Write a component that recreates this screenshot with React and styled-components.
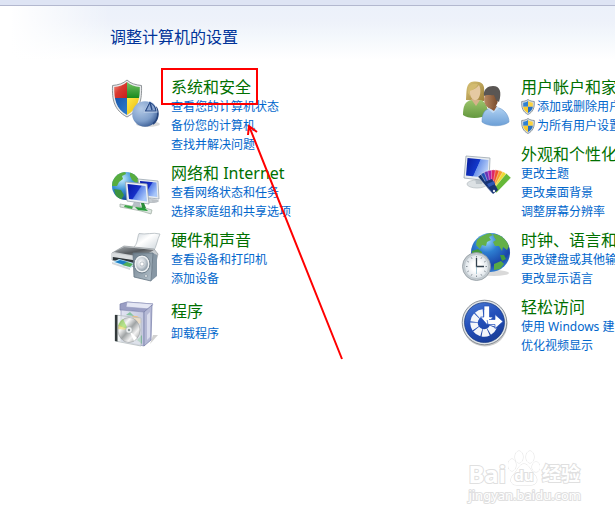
import React from "react";
import styled, { createGlobalStyle } from "styled-components";

const leftColumn = [
  {
    icon: "security",
    title: "系统和安全",
    marked: true,
    links: [
      { text: "查看您的计算机状态" },
      { text: "备份您的计算机" },
      { text: "查找并解决问题" },
    ],
  },
  {
    icon: "network",
    title: "网络和 Internet",
    links: [{ text: "查看网络状态和任务" }, { text: "选择家庭组和共享选项" }],
  },
  {
    icon: "hardware",
    title: "硬件和声音",
    links: [{ text: "查看设备和打印机" }, { text: "添加设备" }],
  },
  {
    icon: "programs",
    title: "程序",
    loose: true,
    links: [{ text: "卸载程序" }],
  },
];

const rightColumn = [
  {
    icon: "users",
    title: "用户帐户和家庭安全",
    links: [
      { text: "添加或删除用户帐户", shield: true },
      { text: "为所有用户设置家长控制", shield: true },
    ],
  },
  {
    icon: "appearance",
    title: "外观和个性化",
    links: [
      { text: "更改主题" },
      { text: "更改桌面背景" },
      { text: "调整屏幕分辨率" },
    ],
  },
  {
    icon: "clock",
    title: "时钟、语言和区域",
    links: [{ text: "更改键盘或其他输入法" }, { text: "更改显示语言" }],
  },
  {
    icon: "access",
    title: "轻松访问",
    links: [{ text: "使用 Windows 建议的设置" }, { text: "优化视频显示" }],
  },
];

const SecurityIcon = () => (
  <svg viewBox="0 0 50 50">
    <defs>
      <clipPath id="secShield">
        <path d="M17 4C20 7 25 8.500 29.800 9C30 21 28 31 17 37C6 31 4 21 4.200 9C9 8.500 14 7 17 4Z" />
      </clipPath>
      <linearGradient id="secRed" x1="0" y1="0" x2="1" y2="1">
        <stop offset="0" stopColor="#f7a596" />
        <stop offset="0.5" stopColor="#d93a30" />
        <stop offset="1" stopColor="#c81d1d" />
      </linearGradient>
      <linearGradient id="secGreen" x1="0" y1="0" x2="0" y2="1">
        <stop offset="0" stopColor="#7cc46a" />
        <stop offset="1" stopColor="#178a1d" />
      </linearGradient>
      <linearGradient id="secBlue" x1="0" y1="0" x2="1" y2="1">
        <stop offset="0" stopColor="#1552a8" />
        <stop offset="1" stopColor="#2f7fd0" />
      </linearGradient>
      <linearGradient id="secYellow" x1="0" y1="0" x2="1" y2="1">
        <stop offset="0" stopColor="#ffe94a" />
        <stop offset="1" stopColor="#e8b400" />
      </linearGradient>
      <radialGradient id="secPie" cx="0.35" cy="0.3" r="0.8">
        <stop offset="0" stopColor="#b4cae6" />
        <stop offset="0.6" stopColor="#7f9fcb" />
        <stop offset="1" stopColor="#2f528c" />
      </radialGradient>
    </defs>
    <ellipse cx="38" cy="46" rx="12" ry="3" fill="#000" opacity="0.15" />
    <path
      d="M17 2C20.500 5.500 26 7 31.500 7.500C32 22 30 32 17 39C4 32 2 22 2.500 7.500C8 7 13.500 5.500 17 2Z"
      fill="#e9ebec"
      stroke="#84898d"
      strokeWidth="0.9"
    />
    <g clipPath="url(#secShield)">
      <rect x="3" y="3" width="14" height="17" fill="url(#secRed)" />
      <rect x="17" y="3" width="14" height="17" fill="url(#secGreen)" />
      <rect x="3" y="20" width="14" height="18" fill="url(#secBlue)" />
      <rect x="17" y="20" width="14" height="18" fill="url(#secYellow)" />
    </g>
    <circle cx="35" cy="36" r="12.8" fill="url(#secPie)" />
    <path d="M46 29A13 13 0 0 1 43 46" fill="none" stroke="#26457d" strokeWidth="1.6" />
    <path d="M33.500 34.500L39.500 23C44 24.500 47 29 47.500 34.500Z" fill="#c7d7ee" />
    <path d="M35.500 33L39.800 24.500C43.500 26 45.500 29 46 33Z" fill="#8ba6d0" stroke="#284a86" strokeWidth="1.2" />
    <path d="M40 24.500L42 32" stroke="#284a86" strokeWidth="1.4" />
  </svg>
);

const NetworkIcon = () => (
  <svg viewBox="0 0 50 50">
    <defs>
      <radialGradient id="netGlobe" cx="0.35" cy="0.25" r="0.8">
        <stop offset="0" stopColor="#c9efff" />
        <stop offset="0.5" stopColor="#3b92d6" />
        <stop offset="1" stopColor="#0c3f8f" />
      </radialGradient>
      <linearGradient id="netScreen" x1="0" y1="0" x2="1" y2="0.6">
        <stop offset="0" stopColor="#0719a5" />
        <stop offset="0.55" stopColor="#1730c8" />
        <stop offset="0.6" stopColor="#5d83e8" />
        <stop offset="1" stopColor="#a8c7fa" />
      </linearGradient>
      <clipPath id="netClip">
        <circle cx="16" cy="22" r="14" />
      </clipPath>
    </defs>
    <circle cx="16" cy="22" r="14" fill="url(#netGlobe)" />
    <g clipPath="url(#netClip)" fill="#58ad3f">
      <path d="M2 17C4 11 9 7 15 7L16 10L12 12L13 15L9 18L7 22L2 22Z" />
      <path d="M20 8C24 9 28 12 30 17L26 19L22 16L20 12Z" />
      <path d="M4 25L11 26L14 31L11 36L6 33Z" fill="#3c9340" />
    </g>
    <ellipse cx="41" cy="37" rx="8" ry="2" fill="#8f98a0" opacity="0.6" />
    <path d="M36 33L41 33L42 38L35 37Z" fill="#c7ced3" />
    <path d="M28 15L48 17L49 35L30 33Z" fill="#e8edf1" stroke="#9ba6b0" strokeWidth="0.8" />
    <path d="M30 17L46.500 18.500L47.300 33L31 31Z" fill="url(#netScreen)" />
    <path d="M24 38L30 39L31 43L22 42Z" fill="#b7c0c6" />
    <path d="M15.500 18L37 20L39 40L17 37Z" fill="#eef2f5" stroke="#99a5af" strokeWidth="0.8" />
    <path d="M17.500 20L35.500 22L37 37.500L19 35Z" fill="url(#netScreen)" />
    <path d="M10 40L21 42L32 43L42 46L41 50L31 47L21 45L10 43Z" fill="#dce6df" stroke="#9caaa0" strokeWidth="0.7" />
    <path d="M15 41L23 42.500L22 45L14 43Z" fill="#42a84c" />
    <path d="M25 43L35 44L38 47L28 46Z" fill="#239b38" />
    <path d="M31 39L34 39L36 44L32 44Z" fill="#2b8d3b" />
  </svg>
);

const HardwareIcon = () => (
  <svg viewBox="0 0 50 50">
    <defs>
      <linearGradient id="hwPaper" x1="0" y1="0" x2="1" y2="1">
        <stop offset="0" stopColor="#cfd6dc" />
        <stop offset="0.4" stopColor="#ffffff" />
        <stop offset="1" stopColor="#c6cfd6" />
      </linearGradient>
      <linearGradient id="hwTop" x1="0" y1="0" x2="1" y2="1">
        <stop offset="0" stopColor="#a4a9ad" />
        <stop offset="0.5" stopColor="#55595d" />
        <stop offset="1" stopColor="#b7babc" />
      </linearGradient>
      <linearGradient id="hwSpk" x1="0" y1="0" x2="1" y2="1">
        <stop offset="0" stopColor="#6f7f8c" />
        <stop offset="1" stopColor="#b4c2cc" />
      </linearGradient>
      <radialGradient id="hwCone" cx="0.4" cy="0.4" r="0.6">
        <stop offset="0" stopColor="#ffffff" />
        <stop offset="0.6" stopColor="#ccd3d9" />
        <stop offset="1" stopColor="#92a0ab" />
      </radialGradient>
    </defs>
    <path d="M29 2.500C36 4 43 1 50 3C47 9 47 15 43 21L23 17C28 13 27 7 29 2.500Z" fill="url(#hwPaper)" stroke="#a9b1b7" strokeWidth="0.7" />
    <path d="M2 22L14 15L44 18L48 23L46 31L24 36L2 29Z" fill="#c9cdd0" stroke="#858c91" strokeWidth="0.6" />
    <path d="M4 21L14 16L44 19L32 26Z" fill="url(#hwTop)" />
    <path d="M2 22L27 26V30L2 26Z" fill="#dadddf" />
    <path d="M3 26L26 29.500V34L3 29Z" fill="#2e3438" />
    <path d="M3 31L9 28L24 32L21 37Z" fill="#b9e4f8" />
    <path d="M5 31L10 29L18 31L14 34Z" fill="#1b7dc4" />
    <path d="M12 34L17 31L23 33L20 36Z" fill="#54ad59" />
    <path d="M2 31L20 37V39L2 33Z" fill="#d3d8db" />
    <path d="M43 22L47 24V45L41 50Z" fill="#8797a4" />
    <path d="M23 22L43 22L41 50L24 46Z" fill="url(#hwSpk)" stroke="#637481" strokeWidth="0.8" />
    <ellipse cx="32" cy="33" rx="8" ry="9" fill="#eef1f3" stroke="#6d7d89" />
    <ellipse cx="32" cy="33" rx="6" ry="7" fill="url(#hwCone)" />
    <circle cx="32" cy="33" r="2" fill="#fff" stroke="#9aa5ad" strokeWidth="0.6" />
    <circle cx="36" cy="45" r="1.400" fill="#edf0f2" stroke="#637481" strokeWidth="0.5" />
  </svg>
);

const ProgramsIcon = () => (
  <svg viewBox="0 0 50 50">
    <defs>
      <linearGradient id="prFront" x1="0" y1="0" x2="1" y2="0">
        <stop offset="0" stopColor="#e3e5f3" />
        <stop offset="1" stopColor="#c3c7df" />
      </linearGradient>
      <linearGradient id="prDisc" x1="0" y1="0" x2="1" y2="1">
        <stop offset="0" stopColor="#8b8f90" />
        <stop offset="0.3" stopColor="#f7f7f7" />
        <stop offset="0.5" stopColor="#9fa3a4" />
        <stop offset="0.7" stopColor="#f2f2f2" />
        <stop offset="1" stopColor="#8b8f90" />
      </linearGradient>
    </defs>
    <path d="M40 46L48 37L43 37Z" fill="#000" opacity="0.18" />
    <path d="M10 6L17 4L43 6L35 14L10 12Z" fill="#9a9ec4" stroke="#777da8" strokeWidth="0.7" />
    <path d="M17 4L43 6L40 11L16 9Z" fill="#e5e7f4" stroke="#9499bd" strokeWidth="0.6" />
    <path d="M11 12L34 14V48L11 43Z" fill="url(#prFront)" stroke="#8e94b7" strokeWidth="0.7" />
    <path d="M34 14L42 7L41 42L34 48Z" fill="#b4b8d5" stroke="#747ba6" strokeWidth="0.7" />
    <path d="M37 17L40 14V39L37 42Z" fill="#d8dbec" />
    <path d="M22 18C28 17 32 21 31 25L26 27Z" fill="#efbf7e" />
    <path d="M16 17L20 14L24 18Z" fill="#86c4a0" />
    <path d="M27 42L32 37V46Z" fill="#63b289" />
    <path d="M5 17L31 20V48L5 43Z" fill="#e6ebec" fillOpacity="0.65" stroke="#b5bcbf" strokeWidth="0.8" />
    <path d="M5 17H7.500V43.500L5 43Z" fill="#333a3b" />
    <ellipse cx="19" cy="32" rx="11" ry="12.500" fill="url(#prDisc)" stroke="#909596" strokeWidth="0.5" />
    <path d="M18 31L8 28C9 24 11 22 13 21Z" fill="#8fd94a" opacity="0.6" />
    <path d="M19 32L8 31L9 27Z" fill="#f0d548" opacity="0.5" />
    <path d="M19 32L27 40L24 43Z" fill="#fff" />
    <circle cx="19" cy="32" r="3.300" fill="#edf0f1" stroke="#9ca2a4" strokeWidth="0.6" />
    <circle cx="19" cy="32" r="1.200" fill="#8b9799" />
  </svg>
);

const UsersIcon = () => (
  <svg viewBox="0 0 50 50">
    <defs>
      <linearGradient id="usHair" x1="0" y1="0" x2="1" y2="1">
        <stop offset="0" stopColor="#d9c478" />
        <stop offset="1" stopColor="#9c7f38" />
      </linearGradient>
      <linearGradient id="usGreen" x1="0" y1="0" x2="0" y2="1">
        <stop offset="0" stopColor="#9cc56c" />
        <stop offset="1" stopColor="#64983f" />
      </linearGradient>
      <linearGradient id="usBlue" x1="0" y1="0" x2="0" y2="1">
        <stop offset="0" stopColor="#aed0f2" />
        <stop offset="1" stopColor="#6c9fd6" />
      </linearGradient>
      <linearGradient id="usFace" x1="0" y1="0" x2="1" y2="0">
        <stop offset="0" stopColor="#b98a63" />
        <stop offset="1" stopColor="#76482a" />
      </linearGradient>
    </defs>
    <path d="M6 22C7 14 5 4 14 3.500C23 3 25 8 24 14V23Z" fill="url(#usHair)" />
    <path d="M3 37C3 28 5 23 12 22L21 22C26 24 28 30 28 36C22 41 8 41 3 37Z" fill="url(#usGreen)" />
    <path d="M11 21L16 28L20 22Z" fill="#d5b28a" />
    <path d="M10 12C13 12 17 10 19 7C21 11 21 17 18 21C15 24 9 21 10 12Z" fill="#e5c9a2" />
    <path d="M8 15C8 8 11 5 18 6C16 11 12 12 10 13L10 18Z" fill="#d3bb70" />
    <path d="M22 44C22 35 25 31 30 31L39 30C45 32 49 38 49 44C43 49 28 49 22 44Z" fill="url(#usBlue)" stroke="#6696ca" strokeWidth="0.6" />
    <path d="M28 31L33 35L39 30L36 27H29Z" fill="#c6dcf3" />
    <path d="M28 29L34 33L37 28Z" fill="#8b5838" />
    <ellipse cx="31" cy="21" rx="7" ry="9.500" fill="url(#usFace)" />
    <path d="M24 18C23 11 28 8 33 8C40 8 42 14 39 24L36 22L34 17C31 18 28 16 24 18Z" fill="#5a5653" />
  </svg>
);

const fanColors = [
  "#15316f",
  "#2152b7",
  "#6635b5",
  "#b122a4",
  "#dd2562",
  "#ee512c",
  "#f4a22a",
  "#edda31",
  "#66b938",
];

const AppearanceIcon = () => (
  <svg viewBox="0 0 50 50">
    <defs>
      <linearGradient id="apScreen" x1="0" y1="0.2" x2="1" y2="0.6">
        <stop offset="0" stopColor="#0a1fa0" />
        <stop offset="0.5" stopColor="#1238cb" />
        <stop offset="0.53" stopColor="#6e94ea" />
        <stop offset="1" stopColor="#c1d6fa" />
      </linearGradient>
    </defs>
    <ellipse cx="17" cy="39" rx="10" ry="4" fill="#dce1e4" stroke="#b4bbc0" strokeWidth="0.7" />
    <path d="M15 33L24 34L22 39H16Z" fill="#bbc3c9" />
    <path d="M6 11L30 13L29 36L4 33Z" fill="#e9edf0" stroke="#9ba6af" strokeWidth="0.8" />
    <path d="M7.500 13L28.500 15L27.500 33L6 30.500Z" fill="url(#apScreen)" />
    <g transform="translate(34 47)">
      {fanColors.map((color, i) => (
        <path
          key={color}
          d="M-2.400 -1L-3.200 -22L3 -22L2.400 -1Z"
          fill={color}
          stroke="#fff"
          strokeWidth="0.35"
          transform={`rotate(${i * 10 - 38})`}
        />
      ))}
    </g>
    <path d="M24 37L32 34L38 45L33 49Z" fill="#173475" />
    <path d="M27 39L34 36L35 39L29 42Z" fill="#2d57b4" />
    <circle cx="34" cy="46" r="1.200" fill="#e5e8ee" />
  </svg>
);

const ClockIcon = () => (
  <svg viewBox="0 0 50 50">
    <defs>
      <radialGradient id="ckGlobe" cx="0.4" cy="0.2" r="0.85">
        <stop offset="0" stopColor="#9bd9fa" />
        <stop offset="0.35" stopColor="#2d7ed1" />
        <stop offset="0.75" stopColor="#1a45a8" />
        <stop offset="1" stopColor="#3a8bd8" />
      </radialGradient>
      <clipPath id="ckClip">
        <circle cx="30.500" cy="21.500" r="19.500" />
      </clipPath>
      <radialGradient id="ckFace">
        <stop offset="0.4" stopColor="#ffffff" />
        <stop offset="1" stopColor="#dce3e8" />
      </radialGradient>
    </defs>
    <ellipse cx="34" cy="42" rx="15" ry="3" fill="#000" opacity="0.15" />
    <circle cx="30.500" cy="21.500" r="19.500" fill="url(#ckGlobe)" />
    <g clipPath="url(#ckClip)" fill="#64b048">
      <path d="M17 9C21 5 25 3 30 2L33 4L29 6L31 9L27 11L26 15L22 14L20 18L16 14Z" />
      <path d="M33 3C41 3 47 8 49 15L47 19L43 16L42 20L39 15L35 15L33 11L36 9L34 6Z" />
      <path d="M12 20L18 18L22 21L22 27L18 30L12 26Z" fill="#439b3d" />
      <path d="M40 24L44 24L46 28L42 30Z" fill="#439b3d" />
      <path d="M34 33L41 30L44 33L40 38L34 39Z" fill="#58a944" />
    </g>
    <circle cx="16.500" cy="35.500" r="14" fill="#c4cbd0" stroke="#8f999f" strokeWidth="0.8" />
    <circle cx="16.500" cy="35.500" r="12" fill="url(#ckFace)" stroke="#abb4ba" strokeWidth="0.5" />
    <g stroke="#6d7780" strokeWidth="0.8">
      {[0, 30, 60, 90, 120, 150, 180, 210, 240, 270, 300, 330].map((angle) => (
        <path key={angle} d="M16.500 25V26.500" transform={`rotate(${angle} 16.500 35.500)`} />
      ))}
    </g>
    <path d="M16.500 27V35.500H24" fill="none" stroke="#33424e" strokeWidth="1.300" />
    <path d="M16.500 35.500V43" stroke="#75a8bc" strokeWidth="0.6" />
  </svg>
);

const AccessIcon = () => (
  <svg viewBox="0 0 50 50">
    <defs>
      <linearGradient id="acBlue" x1="0" y1="0" x2="0.5" y2="1">
        <stop offset="0" stopColor="#4f7fd6" />
        <stop offset="0.5" stopColor="#2450bb" />
        <stop offset="1" stopColor="#1a3f9c" />
      </linearGradient>
    </defs>
    <circle cx="25" cy="26" r="22.500" fill="#000" opacity="0.2" />
    <circle cx="24.500" cy="24.500" r="22.300" fill="#dfe3e7" stroke="#747b84" strokeWidth="0.8" />
    <circle cx="24.500" cy="24.500" r="20" fill="url(#acBlue)" stroke="#133680" strokeWidth="0.7" />
    <path
      d="M23 15A10 10 0 1 0 34 25"
      fill="none"
      stroke="#f4f6fa"
      strokeWidth="7.500"
      strokeDasharray="6.200 0.900"
    />
    <path d="M24 8H29.500V19H33L27 26.500L20.500 19H24Z" fill="#fff" stroke="#2450bb" strokeWidth="0.7" />
    <path d="M27 21.500H35V16.500L43 23.500L35 30.500V26.500H28Z" fill="#fff" stroke="#2450bb" strokeWidth="0.7" />
    <path d="M24.500 12H29V22H24.500Z" fill="#fff" />
  </svg>
);

const icons = {
  security: SecurityIcon,
  network: NetworkIcon,
  hardware: HardwareIcon,
  programs: ProgramsIcon,
  users: UsersIcon,
  appearance: AppearanceIcon,
  clock: ClockIcon,
  access: AccessIcon,
};

const Shield = () => (
  <svg width="14" height="16" viewBox="0 0 14 16">
    <path d="M7 0.500C9 2 11 2.300 13.300 2.500C13.600 9 12 13 7 15.500C2 13 0.400 9 0.700 2.500C3 2.300 5 2 7 0.500Z" fill="#d9dfe3" stroke="#77828a" strokeWidth="0.8" />
    <path d="M7 2C5.500 3.200 4 3.500 2.200 3.700L2.200 7.800H7Z" fill="#3181d2" />
    <path d="M7 2C8.500 3.200 10 3.500 11.800 3.700L11.800 7.800H7Z" fill="#fbd341" />
    <path d="M2.200 7.800H7V14C4 12.500 2.500 10.500 2.200 7.800Z" fill="#f7c92c" />
    <path d="M11.800 7.800H7V14C10 12.500 11.500 10.500 11.800 7.800Z" fill="#276fc0" />
  </svg>
);

const Category = ({ item }) => {
  const Icon = icons[item.icon];
  return (
    <Item>
      <IconBox>
        <Icon />
      </IconBox>
      <Lines $loose={item.loose}>
        <Heading>
          <a href="#">{item.title}</a>
          {item.marked && <Mark />}
        </Heading>
        {item.links.map((link) => (
          <TaskLink href="#" key={link.text}>
            {link.shield && <Shield />}
            {link.text}
          </TaskLink>
        ))}
      </Lines>
    </Item>
  );
};

export default function App() {
  return (
    <Window>
      <GlobalStyle />
      <TopBar />
      <Content>
        <Title>调整计算机的设置</Title>
        <Columns>
          <Column>
            {leftColumn.map((item) => (
              <Category item={item} key={item.icon} />
            ))}
          </Column>
          <Column>
            {rightColumn.map((item) => (
              <Category item={item} key={item.icon} />
            ))}
          </Column>
        </Columns>
      </Content>
      <Arrow viewBox="0 0 100 240">
        <path d="M97 236L4 3M3 12L4 3L12 9" />
      </Arrow>
      <Watermark>
        <Brand>
          <span>Bai</span>
          <Paw>
            <svg viewBox="0 0 32 36">
              <ellipse cx="4" cy="15" rx="4" ry="6" />
              <ellipse cx="11" cy="7" rx="4" ry="6" />
              <ellipse cx="22" cy="7" rx="4" ry="6" />
              <ellipse cx="28" cy="17" rx="4" ry="5" />
              <path d="M16 14C21 14 22 20 26 24C31 29 29 35 23 35H9C2 35 1 29 6 24C10 20 11 14 16 14Z" />
            </svg>
            <em>du</em>
          </Paw>
          <Experience>经验</Experience>
        </Brand>
        <Site>jingyan.baidu.com</Site>
      </Watermark>
    </Window>
  );
}

const GlobalStyle = createGlobalStyle`
  body {
    margin: 0;
    background-color: #ffffff;
    font-family: "Noto Sans", "Noto Sans CJK SC", sans-serif;
  }
  a {
    text-decoration: none;
  }
`;

const Window = styled.div`
  position: relative;
  min-height: 100vh;
  overflow: hidden;
`;

const TopBar = styled.div`
  height: 5px;
  background-color: #dee4f4;
  border-bottom: 1px solid #b3b8cf;
`;

const Content = styled.main`
  padding: 20px 0 40px 110px;
  background: linear-gradient(to right, #ffffff 10px, rgba(255, 255, 255, 0) 110px),
    linear-gradient(#ecf1fa, #eef2fa 16px, #f4f8fc 32px, #ffffff 54px);
`;

const Title = styled.h1`
  margin: 0 0 30px;
  color: #003399;
  font-weight: 400;
  font-size: 16px;
  line-height: 22px;
`;

const Columns = styled.div`
  display: grid;
  grid-template-columns: 350px 350px;
`;

const Column = styled.div`
  display: flex;
  flex-direction: column;
  gap: 10px;
`;

const Item = styled.section`
  display: flex;
  gap: 11px;
`;

const IconBox = styled.div`
  flex: none;
  width: 50px;
  height: 50px;

  svg {
    display: block;
    width: 100%;
    height: 100%;
    overflow: visible;
  }
`;

const Lines = styled.div`
  display: flex;
  flex-direction: column;
  align-items: flex-start;
  gap: ${({ $loose }) => ($loose ? "3px" : "0")};
  padding-top: ${({ $loose }) => ($loose ? "4px" : "0")};
`;

const Heading = styled.h2`
  position: relative;
  margin: 0;
  font-weight: 400;
  font-size: 16px;
  line-height: 19px;
  white-space: nowrap;

  a {
    color: #007000;
  }
`;

const TaskLink = styled.a`
  display: flex;
  align-items: center;
  gap: 2px;
  color: #0066cc;
  font-size: 12px;
  line-height: 19px;
  white-space: nowrap;
`;

const Mark = styled.span`
  position: absolute;
  inset: -10px -7px -8px -10px;
  border: 2px solid #ff0000;
`;

const Arrow = styled.svg`
  position: absolute;
  top: 123px;
  left: 245px;
  width: 100px;
  height: 240px;
  fill: none;
  stroke: #ff0000;
  stroke-width: 2;
  pointer-events: none;
`;

const Watermark = styled.div`
  position: absolute;
  right: 34px;
  bottom: 13px;
  color: #ffffff;
  font-family: "Noto Sans", "Noto Sans CJK SC", sans-serif;
  -webkit-text-stroke: 2px #e0e0e0;
  paint-order: stroke fill;
`;

const Brand = styled.div`
  display: flex;
  align-items: flex-end;
  gap: 2px;
  font-weight: 700;
  font-size: 24px;
  line-height: 24px;
`;

const Paw = styled.span`
  position: relative;
  width: 32px;
  height: 36px;

  svg {
    display: block;
    fill: #ffffff;
    stroke: #e0e0e0;
  }
  em {
    position: absolute;
    right: 0;
    bottom: 1px;
    left: 0;
    font-size: 15px;
    line-height: 20px;
    font-style: normal;
    text-align: center;
  }
`;

const Experience = styled.span`
  font-size: 19px;
`;

const Site = styled.div`
  font-size: 13px;
  line-height: 18px;
`;
